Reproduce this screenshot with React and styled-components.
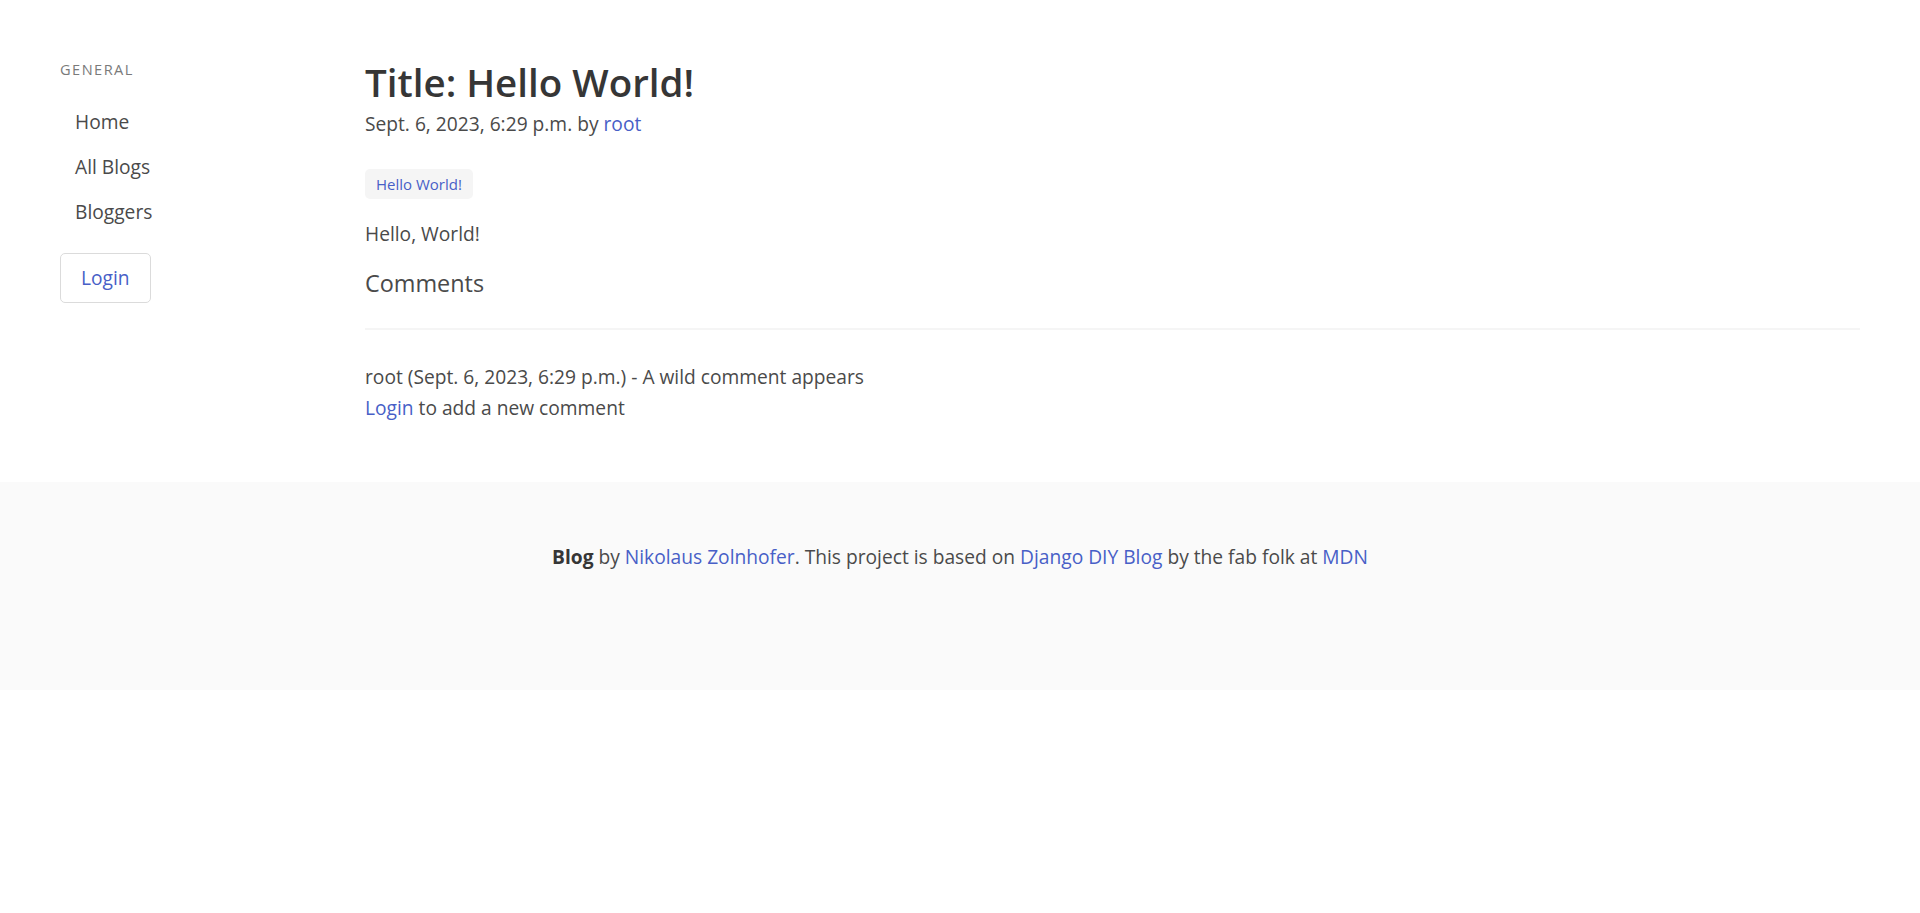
import React from "react";
import styled, { createGlobalStyle } from "styled-components";

const FONT = `"Segoe UI", "Open Sans", "Noto Sans", sans-serif`;
const LINK = "#485fc7";

const GlobalStyle = createGlobalStyle`
  html, body { margin: 0; padding: 0; background: #ffffff; }
  body {
    font-family: ${FONT};
    font-size: 19.2px;
    line-height: 30px;
    color: #4a4a4a;
  }
  * { box-sizing: border-box; }
`;

const Section = styled.section`
  padding: 60px 45px 59px;
`;

const Columns = styled.div`
  display: flex;
  align-items: flex-start;
`;

const Sidebar = styled.aside`
  flex: 0 0 305px;
  padding: 0 15px;
`;

const MenuLabel = styled.p`
  margin: 0 0 20px;
  font-size: 14.6px;
  line-height: 19px;
  letter-spacing: 0.1em;
  text-transform: uppercase;
  color: #7a7a7a;
`;

const MenuList = styled.ul`
  list-style: none;
  margin: 0;
  padding: 0;
  line-height: 25px;
`;

const MenuLink = styled.a`
  display: block;
  padding: 10px 15px;
  border-radius: 2px;
  color: #4a4a4a;
  text-decoration: none;
`;

const Button = styled.a`
  display: inline-flex;
  align-items: center;
  justify-content: center;
  height: 50px;
  margin-top: 19px;
  padding: 0 20px;
  border: 1px solid #dbdbdb;
  border-radius: 5px;
  background: #fff;
  color: ${LINK};
  text-decoration: none;
`;

const Main = styled.main`
  flex: 1;
  min-width: 0;
  padding: 0 15px;
`;

const Title = styled.h1`
  margin: 0;
  font-size: 38.5px;
  font-weight: 600;
  line-height: 45px;
  color: #363636;
`;

const Meta = styled.p`
  margin: 4px 0 30px;
`;

const Link = styled.a`
  color: ${LINK};
  text-decoration: none;
`;

const Tags = styled.div`
  display: flex;
  margin-bottom: 20px;
`;

const Tag = styled.span`
  display: inline-flex;
  align-items: center;
  height: 30px;
  padding: 0 11px;
  font-size: 15px;
  border-radius: 5px;
  background: #f5f5f5;
  color: ${LINK};
`;

const Body = styled.p`
  margin: 0 0 19px;
`;

const Subtitle = styled.h2`
  margin: 0;
  font-size: 23.4px;
  font-weight: 400;
  line-height: 31px;
  color: #4a4a4a;
`;

const Rule = styled.hr`
  margin: 29px 0 32px;
  height: 2px;
  border: none;
  background: #f5f5f5;
`;

const Line = styled.p`
  margin: 0;
  line-height: 30.5px;
`;

const Footer = styled.footer`
  padding: 60px 30px 118px;
  background: #fafafa;
  text-align: center;
`;

const Strong = styled.strong`
  font-weight: 700;
  color: #363636;
`;

export default function App() {
  return (
    <>
      <GlobalStyle />
      <Section>
        <Columns>
          <Sidebar>
            <MenuLabel>General</MenuLabel>
            <MenuList>
              <li><MenuLink href="#">Home</MenuLink></li>
              <li><MenuLink href="#">All Blogs</MenuLink></li>
              <li><MenuLink href="#">Bloggers</MenuLink></li>
            </MenuList>
            <Button href="#">Login</Button>
          </Sidebar>
          <Main>
            <Title>Title: Hello World!</Title>
            <Meta>
              Sept. 6, 2023, 6:29 p.m. by <Link href="#">root</Link>
            </Meta>
            <Tags>
              <Tag>Hello World!</Tag>
            </Tags>
            <Body>Hello, World!</Body>
            <Subtitle>Comments</Subtitle>
            <Rule />
            <Line>root (Sept. 6, 2023, 6:29 p.m.) - A wild comment appears</Line>
            <Line>
              <Link href="#">Login</Link> to add a new comment
            </Line>
          </Main>
        </Columns>
      </Section>
      <Footer>
        <Strong>Blog</Strong> by <Link href="#">Nikolaus Zolnhofer</Link>. This project is based on{" "}
        <Link href="#">Django DIY Blog</Link> by the fab folk at <Link href="#">MDN</Link>
      </Footer>
    </>
  );
}
